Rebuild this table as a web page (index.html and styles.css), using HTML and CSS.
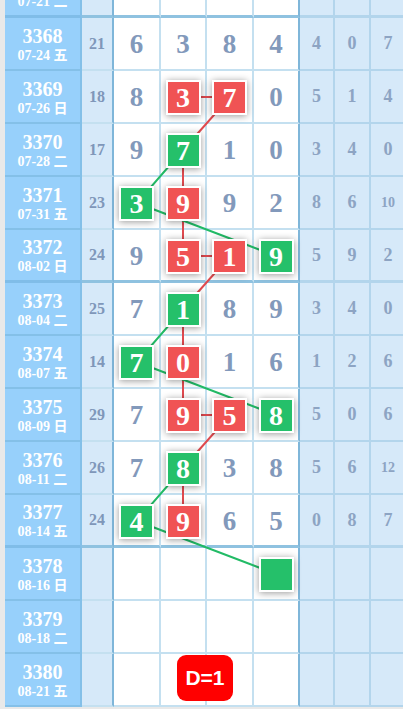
FILE: index.html
```html
<!DOCTYPE html>
<html lang="zh">
<head>
    <meta charset="UTF-8">
    <meta name="viewport" content="width=device-width, initial-scale=1.0">
    <title>走势图</title>
    <link rel="stylesheet" href="styles.css">
</head>
<body>
    <div class="chart">
        <div class="row grp">
            <div class="c-issue"><b>3367</b><span>07-21 二</span></div>
            <div class="c-sum">17</div>
            <div class="c-num">5</div><div class="c-num">2</div><div class="c-num">2</div><div class="c-num">9</div>
            <div class="c-tail">3</div><div class="c-tail">0</div><div class="c-tail">7</div>
        </div>
        <div class="row">
            <div class="c-issue"><b>3368</b><span>07-24 五</span></div>
            <div class="c-sum">21</div>
            <div class="c-num">6</div><div class="c-num">3</div><div class="c-num">8</div><div class="c-num">4</div>
            <div class="c-tail">4</div><div class="c-tail">0</div><div class="c-tail">7</div>
        </div>
        <div class="row">
            <div class="c-issue"><b>3369</b><span>07-26 日</span></div>
            <div class="c-sum">18</div>
            <div class="c-num">8</div><div class="c-num"><i class="ball red">3</i></div><div class="c-num"><i class="ball red">7</i></div><div class="c-num">0</div>
            <div class="c-tail">5</div><div class="c-tail">1</div><div class="c-tail">4</div>
        </div>
        <div class="row">
            <div class="c-issue"><b>3370</b><span>07-28 二</span></div>
            <div class="c-sum">17</div>
            <div class="c-num">9</div><div class="c-num"><i class="ball green">7</i></div><div class="c-num">1</div><div class="c-num">0</div>
            <div class="c-tail">3</div><div class="c-tail">4</div><div class="c-tail">0</div>
        </div>
        <div class="row">
            <div class="c-issue"><b>3371</b><span>07-31 五</span></div>
            <div class="c-sum">23</div>
            <div class="c-num"><i class="ball green">3</i></div><div class="c-num"><i class="ball red">9</i></div><div class="c-num">9</div><div class="c-num">2</div>
            <div class="c-tail">8</div><div class="c-tail">6</div><div class="c-tail small">10</div>
        </div>
        <div class="row grp">
            <div class="c-issue"><b>3372</b><span>08-02 日</span></div>
            <div class="c-sum">24</div>
            <div class="c-num">9</div><div class="c-num"><i class="ball red">5</i></div><div class="c-num"><i class="ball red">1</i></div><div class="c-num"><i class="ball green">9</i></div>
            <div class="c-tail">5</div><div class="c-tail">9</div><div class="c-tail">2</div>
        </div>
        <div class="row">
            <div class="c-issue"><b>3373</b><span>08-04 二</span></div>
            <div class="c-sum">25</div>
            <div class="c-num">7</div><div class="c-num"><i class="ball green">1</i></div><div class="c-num">8</div><div class="c-num">9</div>
            <div class="c-tail">3</div><div class="c-tail">4</div><div class="c-tail">0</div>
        </div>
        <div class="row">
            <div class="c-issue"><b>3374</b><span>08-07 五</span></div>
            <div class="c-sum">14</div>
            <div class="c-num"><i class="ball green">7</i></div><div class="c-num"><i class="ball red">0</i></div><div class="c-num">1</div><div class="c-num">6</div>
            <div class="c-tail">1</div><div class="c-tail">2</div><div class="c-tail">6</div>
        </div>
        <div class="row">
            <div class="c-issue"><b>3375</b><span>08-09 日</span></div>
            <div class="c-sum">29</div>
            <div class="c-num">7</div><div class="c-num"><i class="ball red">9</i></div><div class="c-num"><i class="ball red">5</i></div><div class="c-num"><i class="ball green">8</i></div>
            <div class="c-tail">5</div><div class="c-tail">0</div><div class="c-tail">6</div>
        </div>
        <div class="row">
            <div class="c-issue"><b>3376</b><span>08-11 二</span></div>
            <div class="c-sum">26</div>
            <div class="c-num">7</div><div class="c-num"><i class="ball green">8</i></div><div class="c-num">3</div><div class="c-num">8</div>
            <div class="c-tail">5</div><div class="c-tail">6</div><div class="c-tail small">12</div>
        </div>
        <div class="row grp">
            <div class="c-issue"><b>3377</b><span>08-14 五</span></div>
            <div class="c-sum">24</div>
            <div class="c-num"><i class="ball green">4</i></div><div class="c-num"><i class="ball red">9</i></div><div class="c-num">6</div><div class="c-num">5</div>
            <div class="c-tail">0</div><div class="c-tail">8</div><div class="c-tail">7</div>
        </div>
        <div class="row">
            <div class="c-issue"><b>3378</b><span>08-16 日</span></div>
            <div class="c-sum"></div>
            <div class="c-num"></div><div class="c-num"></div><div class="c-num"></div><div class="c-num"><i class="ball green"></i></div>
            <div class="c-tail"></div><div class="c-tail"></div><div class="c-tail"></div>
        </div>
        <div class="row">
            <div class="c-issue"><b>3379</b><span>08-18 二</span></div>
            <div class="c-sum"></div>
            <div class="c-num"></div><div class="c-num"></div><div class="c-num"></div><div class="c-num"></div>
            <div class="c-tail"></div><div class="c-tail"></div><div class="c-tail"></div>
        </div>
        <div class="row">
            <div class="c-issue"><b>3380</b><span>08-21 五</span></div>
            <div class="c-sum"></div>
            <div class="c-num"></div><div class="c-num"></div><div class="c-num"></div><div class="c-num"></div>
            <div class="c-tail"></div><div class="c-tail"></div><div class="c-tail"></div>
        </div>

        <!-- trend lines, drawn under the balls -->
        <svg class="lines" width="407" height="742" viewBox="0 0 407 742">
            <polyline class="line-red" points="183,132 230,132 183,185 183,291 230,291 183,344 183,450 230,450 183,503 183,556"/>
            <polyline class="line-green" points="183,185 137,238 276,291"/>
            <polyline class="line-green" points="183,344 137,397 276,450"/>
            <polyline class="line-green" points="183,503 137,556 276,609"/>
        </svg>

        <div class="badge">D=1</div>
    </div>
</body>
</html>
```

FILE: styles.css
```css
body {
    margin: 0;
    padding: 0;
    overflow: hidden;
    background-color: #e9e9e9;
    font-family: "Liberation Serif", "Times New Roman", "Noto Sans CJK SC", serif;
}

.chart {
    position: relative;
    margin-top: -35px;
    padding-left: 5px;
    width: 402px;
}

.row {
    display: grid;
    grid-template-columns: 77px 32px 47px 46px 47px 46px 35px 36px 36px;
    height: 53px;
}

.row > div {
    box-sizing: border-box;
    display: flex;
    align-items: center;
    justify-content: center;
    border-right: 2px solid #c4e0f0;
    border-bottom: 2px solid #c4e0f0;
    font-weight: bold;
}

.c-issue {
    flex-direction: column;
    background-color: #97d0fb;
    color: white;
    border-color: #84c0e8 !important;
    padding-top: 2px;
}

.c-issue b {
    font-size: 20px;
    line-height: 21px;
}

.c-issue span {
    font-size: 14px;
    line-height: 17px;
}

.c-sum {
    background-color: #d6e9f9;
    color: #7f97b9;
    font-size: 16px;
    border-right-color: #7fb6d9 !important;
}

.c-num {
    background-color: white;
    color: #8299bb;
    font-size: 27px;
    padding-top: 2px;
}

.row > .c-num:nth-child(6) {
    border-right-color: #7fb6d9;
}

.c-tail {
    background-color: #d6e9f9;
    color: #8da4c3;
    font-size: 18px;
    border-color: #b3d5ec !important;
}

.c-tail.small {
    font-size: 14px;
}

.row.grp > div {
    border-bottom: 3px solid #8fc2e0;
}

.row.grp > .c-issue {
    border-bottom-color: #80bde8 !important;
}

.ball {
    position: relative;
    z-index: 2;
    box-sizing: border-box;
    width: 35px;
    height: 35px;
    border: 2px solid white;
    box-shadow: 0 1px 7px rgba(0, 0, 0, 0.4);
    color: white;
    font-style: normal;
    font-size: 28px;
    line-height: 31px;
    text-align: center;
}

.ball.red {
    background-color: #f05354;
}

.ball.green {
    background-color: #25c06a;
}

.lines {
    position: absolute;
    left: 0;
    top: 0;
    z-index: 1;
    pointer-events: none;
}

.lines polyline {
    fill: none;
    stroke-width: 2;
}

.line-red {
    stroke: #e04a4f;
}

.line-green {
    stroke: #22bb66;
}

.badge {
    position: absolute;
    left: 177px;
    top: 690px;
    z-index: 3;
    width: 56px;
    height: 46px;
    border-radius: 9px;
    background-color: #ff0000;
    color: white;
    font-family: "Liberation Sans", Arial, sans-serif;
    font-weight: bold;
    font-size: 21px;
    line-height: 46px;
    text-align: center;
}
```
